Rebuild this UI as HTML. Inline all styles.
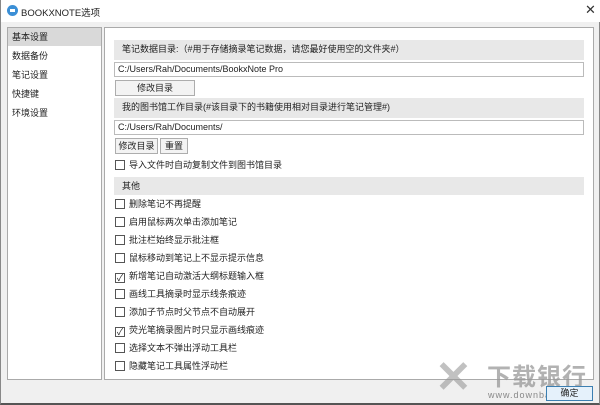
<!DOCTYPE html><html><head><meta charset="utf-8"><style>
*{margin:0;padding:0;box-sizing:border-box}
body{width:600px;height:405px;background:#f0f0f0;font-family:"Liberation Sans","Noto Sans CJK SC",sans-serif;font-size:9px;color:#222;position:relative;overflow:hidden;border-left:1px solid #888;border-right:1px solid #888;border-bottom:2px solid #555}
.a{position:absolute}
.title{left:0;top:0;width:600px;height:22px;background:#fff}
.panel{background:#fff;border:1px solid #aaa}
.hdr{background:#e8e8e8;left:113px;width:470px;padding-left:8px;line-height:19px}
.inp{left:113px;width:470px;height:15px;border:1px solid #bbb;background:#fff;padding-left:3px;line-height:13px;font-size:9px}
.btn{border:1px solid #adadad;background:#f3f3f3;text-align:center;line-height:14px;height:16px}
.cb{left:114px;line-height:11px}
.cb i{display:inline-block;width:10px;height:10px;border:1px solid #555;vertical-align:-2px;margin-right:4px;font-style:normal;font-size:9px;line-height:8px;text-align:center}
.nav{left:11px;line-height:18px}
</style></head><body>
<div class="a title"></div>
<div class="a" style="left:6px;top:5px;width:11px;height:11px;border-radius:50%;background:#3b8fd6"><div style="margin:4px 3px;height:3px;background:#fff"></div></div>
<div class="a" style="left:20px;top:5px;font-size:9.5px">BOOKXNOTE选项</div>
<div class="a" style="left:584px;top:2px;font-size:13px;color:#333">✕</div>
<div class="a panel" style="left:6px;top:27px;width:95px;height:353px"></div>
<div class="a" style="left:7px;top:28px;width:93px;height:18px;background:#d9d9d9"></div>
<div class="a nav" style="top:28px">基本设置</div>
<div class="a nav" style="top:47px">数据备份</div>
<div class="a nav" style="top:66px">笔记设置</div>
<div class="a nav" style="top:85px">快捷键</div>
<div class="a nav" style="top:104px">环境设置</div>
<div class="a panel" style="left:103px;top:27px;width:490px;height:353px"></div>
<div class="a hdr" style="top:40px;height:20px">笔记数据目录:（#用于存储摘录笔记数据，请您最好使用空的文件夹#）</div>
<div class="a inp" style="top:62px">C:/Users/Rah/Documents/BookxNote Pro</div>
<div class="a btn" style="left:114px;top:80px;width:80px">修改目录</div>
<div class="a hdr" style="top:98px;height:20px">我的图书馆工作目录(#该目录下的书籍使用相对目录进行笔记管理#)</div>
<div class="a inp" style="top:120px">C:/Users/Rah/Documents/</div>
<div class="a btn" style="left:114px;top:138px;width:43px">修改目录</div>
<div class="a btn" style="left:159px;top:138px;width:28px">重置</div>
<div class="a cb" style="top:160px"><i></i>导入文件时自动复制文件到图书馆目录</div>
<div class="a hdr" style="top:177px;height:18px;line-height:18px">其他</div>
<div class="a cb" style="top:199px"><i></i>删除笔记不再提醒</div>
<div class="a cb" style="top:217px"><i></i>启用鼠标两次单击添加笔记</div>
<div class="a cb" style="top:235px"><i></i>批注栏始终显示批注框</div>
<div class="a cb" style="top:253px"><i></i>鼠标移动到笔记上不显示提示信息</div>
<div class="a cb" style="top:271px"><i>✓</i>新增笔记自动激活大纲标题输入框</div>
<div class="a cb" style="top:289px"><i></i>画线工具摘录时显示线条痕迹</div>
<div class="a cb" style="top:307px"><i></i>添加子节点时父节点不自动展开</div>
<div class="a cb" style="top:325px"><i>✓</i>荧光笔摘录图片时只显示画线痕迹</div>
<div class="a cb" style="top:343px"><i></i>选择文本不弹出浮动工具栏</div>
<div class="a cb" style="top:361px"><i></i>隐藏笔记工具属性浮动栏</div>
<div class="a" style="left:434px;top:356px;font-size:44px;font-weight:bold;color:#999;opacity:.6;line-height:44px">✕</div>
<div class="a" style="left:486px;top:364px;font-size:24px;font-weight:bold;color:#999;opacity:.75;letter-spacing:1px;line-height:28px">下载银行</div>
<div class="a" style="left:487px;top:390px;font-size:9px;color:#888;letter-spacing:1px">www.downbank.cn</div>
<div class="a btn" style="left:545px;top:386px;width:47px;height:15px;line-height:12px;border:1.5px solid #3c7fb1;background:#e5f1fb">确定</div>
</body></html>
